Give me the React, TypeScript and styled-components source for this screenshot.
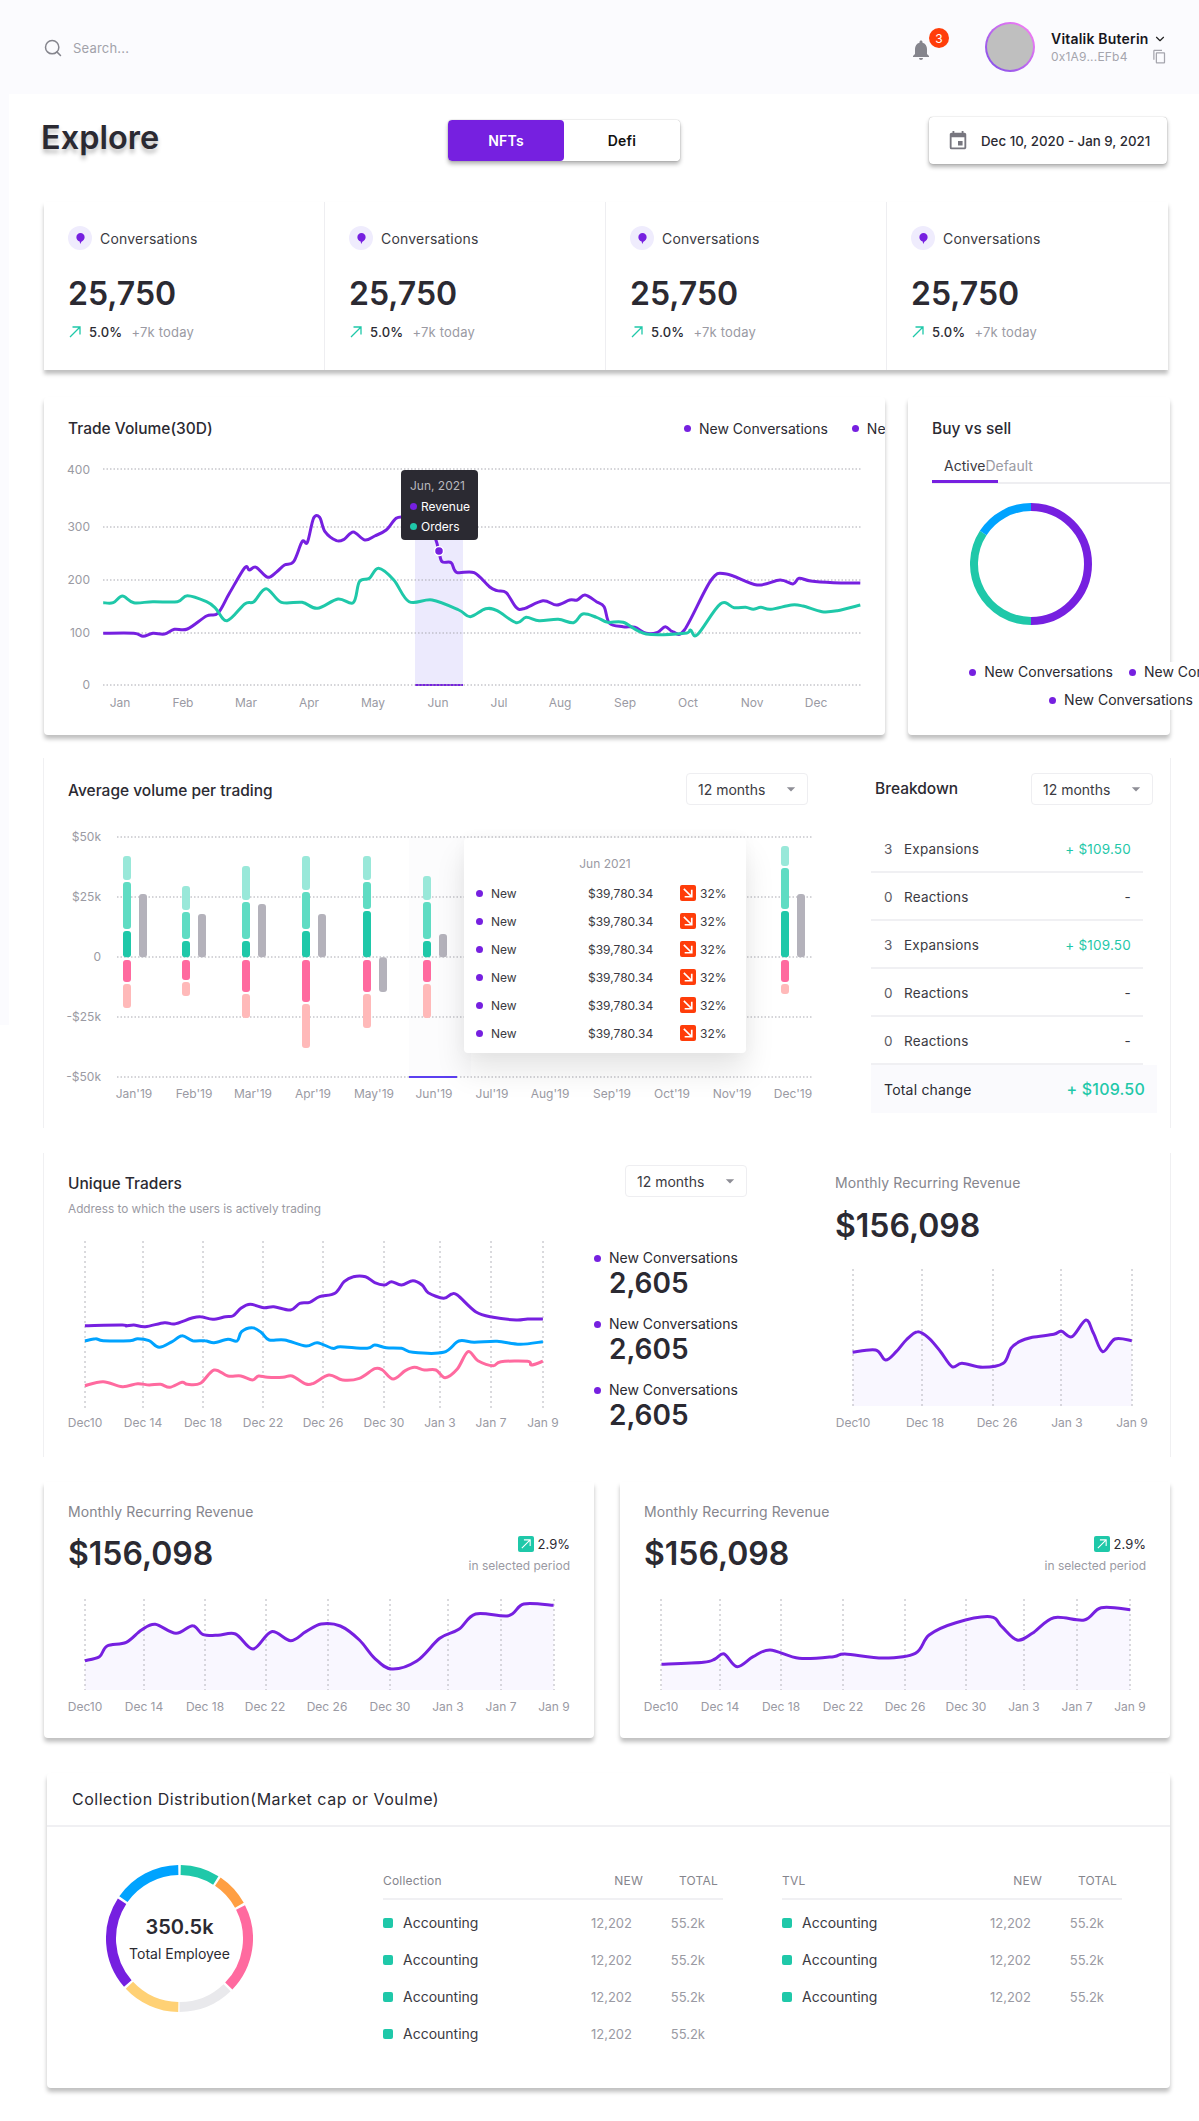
import React from 'react'
import styled, { createGlobalStyle } from 'styled-components'
import { Search, ChevronDown } from 'lucide-react'
import { MdNotifications, MdEvent, MdOutlineContentCopy, MdArrowDropDown } from 'react-icons/md'

const PURPLE = '#7620e0'
const TEAL = '#1fc8a9'
const BLUE = '#00a3ff'
const PINK = '#ff6a9f'
const INK = '#2b2a32'
const MUTED = '#9a9aa3'

type Pt = number[]

// the traces below were read off the reference crops, so they come in crop units
const toPlot = (pts: Pt[], ox: number, oy: number, top: number): Pt[] =>
    pts.map(([x, y]) => [x / 1.3077 - ox, top + y / 3 - oy])

const smooth = (pts: Pt[]) => {
    let d = `M${pts[0][0].toFixed(1)} ${pts[0][1].toFixed(1)}`
    for (let i = 0; i < pts.length - 1; i++) {
        const p0 = pts[i - 1] || pts[i]
        const p1 = pts[i]
        const p2 = pts[i + 1]
        const p3 = pts[i + 2] || p2
        const c1x = p1[0] + (p2[0] - p0[0]) / 6
        const c1y = p1[1] + (p2[1] - p0[1]) / 6
        const c2x = p2[0] - (p3[0] - p1[0]) / 6
        const c2y = p2[1] - (p3[1] - p1[1]) / 6
        d += ` C${c1x.toFixed(1)} ${c1y.toFixed(1)} ${c2x.toFixed(1)} ${c2y.toFixed(1)} ${p2[0].toFixed(1)} ${p2[1].toFixed(1)}`
    }
    return d
}

const arc = (cx: number, cy: number, r: number, from: number, to: number) => {
    const a = ((from - 90) * Math.PI) / 180
    const b = ((to - 90) * Math.PI) / 180
    const large = to - from > 180 ? 1 : 0
    return `M${cx + r * Math.cos(a)} ${cy + r * Math.sin(a)} A${r} ${r} 0 ${large} 1 ${cx + r * Math.cos(b)} ${cy + r * Math.sin(b)}`
}

// DATA
const tradePurple: Pt[] = [[135,760],[175,760],[187,769],[200,760],[215,762],[228,748],[245,747],[270,708],[285,700],[300,640],[320,563],[326,570],[335,562],[350,592],[362,575],[372,555],[384,545],[395,485],[402,487],[410,415],[418,412],[425,455],[440,482],[450,478],[462,456],[477,480],[490,468],[505,450],[518,415],[530,410],[550,400],[562,440],[570,480],[574,513],[578,545],[590,548],[597,577],[620,578],[640,620],[650,632],[662,638],[675,682],[685,686],[710,662],[728,675],[745,660],[755,660],[765,645],[780,665],[790,680],[797,730],[815,740],[830,742],[845,760],[860,757],[870,740],[880,755],[895,750],[930,600],[950,582],[990,615],[1020,600],[1037,612],[1045,595],[1060,603],[1090,608],[1125,609]]
const tradeTeal: Pt[] = [[135,668],[148,668],[160,648],[175,668],[200,665],[232,665],[245,647],[270,665],[282,685],[297,722],[320,672],[332,665],[348,626],[368,667],[395,667],[415,685],[442,657],[462,668],[470,605],[483,595],[495,565],[515,600],[535,665],[565,660],[600,690],[615,710],[635,686],[650,692],[675,728],[688,712],[705,722],[730,718],[750,728],[762,702],[780,712],[795,727],[815,727],[845,762],[895,760],[903,750],[912,764],[942,672],[960,683],[975,682],[985,688],[995,682],[1008,688],[1035,675],[1050,678],[1075,695],[1095,692],[1125,675]]
const tradeMonths: [string, number][] = [['Jan',120],['Feb',183],['Mar',246],['Apr',309],['May',373],['Jun',438],['Jul',499],['Aug',560],['Sep',625],['Oct',688],['Nov',752],['Dec',816]]

const traderPurple: Pt[] = [[111,557],[160,555],[165,558],[175,555],[190,560],[215,548],[228,552],[250,535],[262,530],[278,538],[295,530],[305,527],[315,505],[327,493],[345,503],[358,500],[380,510],[392,490],[405,487],[418,470],[438,460],[450,425],[462,410],[478,410],[490,428],[503,435],[512,425],[525,435],[540,422],[552,435],[560,458],[580,475],[590,463],[598,465],[622,515],[645,532],[675,540],[690,537],[710,537]]
const traderBlue: Pt[] = [[111,603],[125,596],[135,602],[170,602],[180,596],[195,602],[208,622],[225,605],[238,587],[252,602],[268,602],[280,608],[298,598],[310,603],[316,575],[330,563],[342,578],[352,600],[372,600],[400,618],[415,608],[435,625],[445,620],[480,625],[490,615],[505,623],[525,625],[540,637],[580,637],[600,603],[620,607],[650,604],[680,613],[710,605]]
const traderPink: Pt[] = [[111,737],[135,725],[160,740],[180,731],[195,735],[210,733],[222,742],[238,727],[245,733],[262,730],[280,690],[298,708],[315,708],[330,720],[338,708],[350,712],[370,712],[382,708],[400,732],[410,730],[430,705],[448,720],[470,715],[490,686],[500,690],[514,717],[530,692],[542,682],[555,690],[570,690],[582,713],[598,687],[612,635],[625,662],[645,677],[655,665],[690,664],[695,675],[710,664]]

const mrrSmall: Pt[] = [[1115,637],[1145,630],[1158,660],[1172,635],[1185,600],[1200,575],[1215,595],[1230,635],[1245,680],[1258,670],[1285,682],[1312,670],[1322,625],[1333,605],[1350,592],[1378,583],[1388,574],[1402,590],[1420,540],[1430,580],[1442,635],[1458,597],[1480,602]]
const mrrOne: Pt[] = [[111,572],[130,560],[140,528],[165,517],[185,480],[203,463],[230,490],[252,467],[265,493],[285,496],[308,492],[331,537],[355,485],[380,512],[400,485],[420,462],[445,468],[470,510],[490,565],[512,597],[545,573],[575,505],[600,478],[622,432],[665,437],[685,402],[724,406]]
const mrrTwo: Pt[] = [[865,583],[920,577],[935,567],[947,552],[964,590],[985,560],[1007,540],[1045,565],[1090,560],[1105,552],[1155,564],[1197,550],[1215,495],[1250,458],[1295,440],[1310,470],[1330,510],[1350,490],[1378,443],[1418,450],[1440,413],[1478,419]]

const longDates = ['Dec10', 'Dec 14', 'Dec 18', 'Dec 22', 'Dec 26', 'Dec 30', 'Jan 3', 'Jan 7', 'Jan 9']
const shortDates = ['Dec10', 'Dec 18', 'Dec 26', 'Jan 3', 'Jan 9']

const barMonths: [string, number][] = [["Jan'19",134],["Feb'19",194],["Mar'19",253],["Apr'19",313],["May'19",374],["Jun'19",434],["Jul'19",492],["Aug'19",550],["Sep'19",612],["Oct'19",672],["Nov'19",732],["Dec'19",793]]
const barGroups = [
    { x: 127, gx: 143, s: [[318,390],[396,537],[543,622],[630,696],[702,774]], g: [432,622] },
    { x: 186, gx: 202, s: [[408,480],[486,567],[573,622],[630,690],[696,738]], g: [492,622] },
    { x: 246, gx: 262, s: [[348,450],[456,567],[573,622],[630,726],[732,804]], g: [462,622] },
    { x: 306, gx: 322, s: [[318,420],[426,537],[543,622],[630,756],[762,894]], g: [492,622] },
    { x: 367, gx: 383, s: [[318,390],[396,477],[483,622],[630,726],[732,834]], g: [622,726] },
    { x: 427, gx: 443, s: [[378,450],[456,567],[573,622],[630,696],[702,804]], g: [552,622] },
    { x: 785, gx: 801, s: [[288,348],[354,477],[483,622],[630,696],[702,732]], g: [432,622] },
]
const barColours = ['#99e8d9', '#5fdcc3', TEAL, PINK, '#ffb9b9']

const breakdown = [
    { n: 3, label: 'Expansions', value: '+ $109.50', up: true },
    { n: 0, label: 'Reactions', value: '-', up: false },
    { n: 3, label: 'Expansions', value: '+ $109.50', up: true },
    { n: 0, label: 'Reactions', value: '-', up: false },
    { n: 0, label: 'Reactions', value: '-', up: false },
]

const UpArrow: React.FC<{ colour: string; size: number }> = ({ colour, size }) => (
    <svg width={size} height={size} viewBox="0 0 12 12" fill="none" stroke={colour} strokeWidth="1.3">
        <path d="M1 11 11 1M3.5 1H11V8.5" />
    </svg>
)

const BubbleIcon: React.FC = () => (
    <svg width="9" height="11" viewBox="0 0 10 12" fill={PURPLE}>
        <path d="M5 0a4.6 4.6 0 0 1 4.6 4.6c0 2.4-1.9 4.3-3.6 4.9L4.6 12l-.5-2.6C2.100 9 .4 7 .4 4.600A4.600 4.600 0 0 1 5 0z" />
    </svg>
)

const DownTile: React.FC = () => (
    <RedTile>
        <svg width="10" height="10" viewBox="0 0 12 12" fill="none" stroke="#fff" strokeWidth="2">
            <path d="M1 1 10.500 10.500M2 10.500H10.500V2" />
        </svg>
    </RedTile>
)

const Picker: React.FC = () => (
    <Select>
        12 months
        <MdArrowDropDown size={20} color="#8e8e96" />
    </Select>
)

type LineProps = {
    width: number
    height: number
    series: { pts: Pt[]; colour: string }[]
    grid: number[]
    gridTop: number
    gridBottom: number
    labels: [string, number][]
    labelY: number
    area?: boolean
}

const LineChart: React.FC<LineProps> = ({ width, height, series, grid, gridTop, gridBottom, labels, labelY, area }) => (
    <ChartSvg width={width} height={height} viewBox={`0 0 ${width} ${height}`}>
        {area && series.map(s => (
            <path
                key={s.colour}
                d={`${smooth(s.pts)} L${s.pts[s.pts.length - 1][0]} ${gridBottom} L${s.pts[0][0]} ${gridBottom} Z`}
                fill="#f9f7ff"
            />
        ))}
        {grid.map(x => (
            <line key={x} x1={x} x2={x} y1={gridTop} y2={gridBottom} stroke="#b4b4bb" strokeWidth="1" strokeDasharray="2 3" />
        ))}
        {series.map(s => (
            <path key={s.colour} d={smooth(s.pts)} fill="none" stroke={s.colour} strokeWidth="3" strokeLinejoin="round" />
        ))}
        {labels.map(([t, x]) => (
            <text key={t} x={x} y={labelY} textAnchor="middle" dominantBaseline="central">{t}</text>
        ))}
    </ChartSvg>
)

const RevenueCard: React.FC<{ pts: Pt[]; grid: number[]; label: number[] }> = ({ pts, grid, label }) => (
    <RevenueBox>
        <RevenueLabel>Monthly Recurring Revenue</RevenueLabel>
        <RevenueHead>
            <BigMoney>$156,098</BigMoney>
            <PeriodBox>
                <PeriodTop>
                    <GreenTile><UpArrow colour="#fff" size={10} /></GreenTile>
                    2.9%
                </PeriodTop>
                <PeriodNote>in selected period</PeriodNote>
            </PeriodBox>
        </RevenueHead>
        <RevenuePlot>
            <LineChart
                width={550}
                height={130}
                series={[{ pts, colour: PURPLE }]}
                grid={grid}
                gridTop={9}
                gridBottom={100}
                labels={longDates.map((t, i) => [t, label[i]] as [string, number])}
                labelY={116}
                area
            />
        </RevenuePlot>
    </RevenueBox>
)

const CollectionTable: React.FC<{ head: string; rows: number }> = ({ head, rows }) => (
    <div>
        <TableHead>
            <span>{head}</span>
            <HeadNum>NEW</HeadNum>
            <HeadNum>TOTAL</HeadNum>
        </TableHead>
        <TableBody>
            {Array.from({ length: rows }).map((_, i) => (
                <TableRow key={i}>
                    <RowName><Swatch />Accounting</RowName>
                    <CellNum $pad={11}>12,202</CellNum>
                    <CellNum $pad={13}>55.2k</CellNum>
                </TableRow>
            ))}
        </TableBody>
    </div>
)

const App: React.FC = () => {
    return (
        <>
            <GlobalStyle />
            <Page>
                <Header>
                    <SearchBox>
                        <Search size={20} strokeWidth={1.8} color="#85858d" />
                        Search...
                    </SearchBox>
                    <HeaderRight>
                        <BellBox>
                            <MdNotifications size={24} color="#85858d" />
                            <BellBadge>3</BellBadge>
                        </BellBox>
                        <Avatar><AvatarFace /></Avatar>
                        <UserBox>
                            <UserLine>
                                <UserName>Vitalik Buterin</UserName>
                                <ChevronDown size={14} color="#222" strokeWidth={2} />
                            </UserLine>
                            <UserLine>
                                <UserAddress>0x1A9...EFb4</UserAddress>
                                <MdOutlineContentCopy size={15} color="#a5a5ad" />
                            </UserLine>
                        </UserBox>
                    </HeaderRight>
                </Header>
                <Main>
                    <TopBar>
                        <PageTitle>Explore</PageTitle>
                        <Toggle>
                            <ToggleItem $active>NFTs</ToggleItem>
                            <ToggleItem>Defi</ToggleItem>
                        </Toggle>
                        <DateButton>
                            <MdEvent size={22} color="#77767f" />
                            Dec 10, 2020 - Jan 9, 2021
                        </DateButton>
                    </TopBar>

                    <Stats>
                        {[0, 1, 2, 3].map(i => (
                            <Stat key={i}>
                                <StatHead>
                                    <StatIcon><BubbleIcon /></StatIcon>
                                    Conversations
                                </StatHead>
                                <StatValue>25,750</StatValue>
                                <StatChange>
                                    <UpArrow colour={TEAL} size={12} />
                                    <StatPercent>5.0%</StatPercent>
                                    <StatToday>+7k today</StatToday>
                                </StatChange>
                            </Stat>
                        ))}
                    </Stats>

                    <ChartsRow>
                        <TradeCard>
                            <TradeHead>
                                <CardTitle>Trade Volume(30D)</CardTitle>
                                <TradeLegend>
                                    <LegendItem><Dot $colour={PURPLE} />New Conversations</LegendItem>
                                    <LegendItem><Dot $colour={PURPLE} />New Conversations</LegendItem>
                                </TradeLegend>
                            </TradeHead>
                            <PlotArea>
                                <ChartSvg width={841} height={262} viewBox="0 0 841 262">
                                    <rect x={371} y={60} width={48} height={165} fill="#eceafd" />
                                    <rect x={371} y={224} width={48} height={2} fill={PURPLE} />
                                    {[[9, 'M400'], [67, 'M300'], [120, 'M200'], [173, 'M100'], [225, 'M0']].map(([y, k]) => (
                                        <line key={k} x1={59} x2={817} y1={y} y2={y} stroke="#a9a9b1" strokeDasharray="1.5 2" />
                                    ))}
                                    {[['400', 9], ['300', 66], ['200', 119], ['100', 172], ['0', 224]].map(([t, y]) => (
                                        <text key={t} x={46} y={y} textAnchor="end" dominantBaseline="central">{t}</text>
                                    ))}
                                    <path d={smooth(toPlot(tradePurple, 44, 460, 380))} fill="none" stroke={PURPLE} strokeWidth="3" />
                                    <path d={smooth(toPlot(tradeTeal, 44, 460, 380))} fill="none" stroke={TEAL} strokeWidth="3" />
                                    <circle cx={395} cy={91} r={4.500} fill={PURPLE} stroke="#fff" strokeWidth="1.500" />
                                    {tradeMonths.map(([t, x]) => (
                                        <text key={t} x={x - 44} y={242} textAnchor="middle" dominantBaseline="central">{t}</text>
                                    ))}
                                </ChartSvg>
                                <DarkTip>
                                    <DarkTipDate>Jun, 2021</DarkTipDate>
                                    <DarkTipRow><Dot $colour={PURPLE} />Revenue</DarkTipRow>
                                    <DarkTipRow><Dot $colour={TEAL} />Orders</DarkTipRow>
                                </DarkTip>
                            </PlotArea>
                        </TradeCard>

                        <BuyCard>
                            <CardTitle>Buy vs sell</CardTitle>
                            <Tabs>
                                <ActiveTab>Active</ActiveTab>
                                <IdleTab>Default</IdleTab>
                            </Tabs>
                            <BuyDonut width={122} height={122} viewBox="0 0 122 122" fill="none" strokeWidth="8">
                                <path d={arc(61, 61, 57, 0, 180)} stroke={PURPLE} />
                                <path d={arc(61, 61, 57, 180, 303)} stroke={TEAL} />
                                <path d={arc(61, 61, 57, 303, 360)} stroke={BLUE} />
                            </BuyDonut>
                            <BuyLegend>
                                <LegendItem><Dot $colour={PURPLE} />New Conversations</LegendItem>
                                <LegendItem><Dot $colour={PURPLE} />New Conversations</LegendItem>
                                <LegendItem><Dot $colour={PURPLE} />New Conversations</LegendItem>
                            </BuyLegend>
                        </BuyCard>
                    </ChartsRow>

                    <AverageCard>
                        <div>
                            <AverageHead>
                                <AverageTitle>Average volume per trading</AverageTitle>
                                <Picker />
                            </AverageHead>
                            <PlotArea $top={15}>
                                <ChartSvg width={827} height={290} viewBox="0 0 827 290">
                                    <rect x={365} y={17} width={62} height={240} fill="#fcfcfd" />
                                    {[17, 77, 137, 197, 257].map(y => (
                                        <line key={y} x1={73} x2={768} y1={y} y2={y} stroke="#a9a9b1" strokeDasharray="1.5 2" />
                                    ))}
                                    <rect x={365} y={256} width={48} height={2} fill="#5b3ff0" />
                                    {[['$50k', 16], ['$25k', 76], ['0', 136], ['-$25k', 196], ['-$50k', 256]].map(([t, y]) => (
                                        <text key={t} x={57} y={y} textAnchor="end" dominantBaseline="central">{t}</text>
                                    ))}
                                    {barGroups.map(g => (
                                        <g key={g.x}>
                                            {g.s.map(([a, b], i) => (
                                                <rect
                                                    key={i}
                                                    x={g.x - 48}
                                                    y={a / 3 - 70}
                                                    width={8}
                                                    height={(b - a) / 3}
                                                    rx={3}
                                                    fill={barColours[i]}
                                                />
                                            ))}
                                            <rect x={g.gx - 48} y={g.g[0] / 3 - 70} width={8} height={(g.g[1] - g.g[0]) / 3} rx={3} fill="#b4b2bb" />
                                        </g>
                                    ))}
                                    {barMonths.map(([t, x]) => (
                                        <text key={t} x={x - 44} y={273} textAnchor="middle" dominantBaseline="central">{t}</text>
                                    ))}
                                </ChartSvg>
                                <LightTip>
                                    <LightTipDate>Jun 2021</LightTipDate>
                                    {[0, 1, 2, 3, 4, 5].map(i => (
                                        <LightTipRow key={i}>
                                            <Dot $colour={PURPLE} />
                                            <span>New</span>
                                            <span>$39,780.34</span>
                                            <DownTile />
                                            <span>32%</span>
                                        </LightTipRow>
                                    ))}
                                </LightTip>
                            </PlotArea>
                        </div>
                        <div>
                            <BreakdownHead>
                                <CardTitle>Breakdown</CardTitle>
                                <Picker />
                            </BreakdownHead>
                            <BreakdownList>
                                {breakdown.map((r, i) => (
                                    <BreakdownRow key={i}>
                                        <BreakdownCount>{r.n}</BreakdownCount>
                                        <span>{r.label}</span>
                                        <BreakdownValue $up={r.up}>{r.value}</BreakdownValue>
                                    </BreakdownRow>
                                ))}
                            </BreakdownList>
                            <TotalRow>
                                Total change
                                <TotalValue>+ $109.50</TotalValue>
                            </TotalRow>
                        </div>
                    </AverageCard>

                    <UniqueCard>
                        <div>
                            <UniqueHead>
                                <div>
                                    <CardTitle>Unique Traders</CardTitle>
                                    <UniqueNote>Address to which the users is actively trading</UniqueNote>
                                </div>
                                <Picker />
                            </UniqueHead>
                            <UniqueBody>
                                <LineChart
                                    width={550}
                                    height={205}
                                    series={[
                                        { pts: toPlot(traderPurple, 44, 1230, 1140), colour: PURPLE },
                                        { pts: toPlot(traderBlue, 44, 1230, 1140), colour: BLUE },
                                        { pts: toPlot(traderPink, 44, 1230, 1140), colour: PINK },
                                    ]}
                                    grid={[41, 99, 159, 219, 279, 340, 396, 447, 499]}
                                    gridTop={11}
                                    gridBottom={180}
                                    labels={longDates.map((t, i) => [t, [41, 99, 159, 219, 279, 340, 396, 447, 499][i]] as [string, number])}
                                    labelY={192}
                                />
                                <TraderLegend>
                                    {[0, 1, 2].map(i => (
                                        <div key={i}>
                                            <LegendItem><Dot $colour={PURPLE} />New Conversations</LegendItem>
                                            <TraderNumber>2,605</TraderNumber>
                                        </div>
                                    ))}
                                </TraderLegend>
                            </UniqueBody>
                        </div>
                        <SideRevenue>
                            <SideLabel>Monthly Recurring Revenue</SideLabel>
                            <SideMoney>$156,098</SideMoney>
                            <SidePlot>
                                <LineChart
                                    width={335}
                                    height={175}
                                    series={[{ pts: toPlot(mrrSmall, 835, 1260, 1140), colour: PURPLE }]}
                                    grid={[18, 87, 158, 226, 297]}
                                    gridTop={9}
                                    gridBottom={146}
                                    labels={shortDates.map((t, i) => [t, [18, 90, 162, 232, 297][i]] as [string, number])}
                                    labelY={162}
                                    area
                                />
                            </SidePlot>
                        </SideRevenue>
                    </UniqueCard>

                    <RevenueRow>
                        <RevenueCard
                            pts={toPlot(mrrOne, 44, 1590, 1470)}
                            grid={[41, 100, 161, 222, 284, 346, 404, 457, 510]}
                            label={[41, 100, 161, 221, 283, 346, 404, 457, 510]}
                        />
                        <RevenueCard
                            pts={toPlot(mrrTwo, 620, 1590, 1470)}
                            grid={[41, 100, 161, 223, 285, 346, 404, 457, 510]}
                            label={[41, 100, 161, 223, 285, 346, 404, 457, 510]}
                        />
                    </RevenueRow>

                    <CollectionCard>
                        <CollectionHead>
                            <CollectionTitle>Collection Distribution(Market cap or Voulme)</CollectionTitle>
                        </CollectionHead>
                        <CollectionBody>
                            <DonutBox>
                                <svg width={147} height={147} viewBox="0 0 147 147" fill="none" strokeWidth="10">
                                    <path d={arc(73.5, 73.5, 68.5, 1, 32)} stroke={TEAL} />
                                    <path d={arc(73.5, 73.5, 68.5, 34, 61)} stroke="#ff9f43" />
                                    <path d={arc(73.5, 73.5, 68.5, 63, 134)} stroke={PINK} />
                                    <path d={arc(73.5, 73.5, 68.5, 136, 180)} stroke="#e9e9ec" />
                                    <path d={arc(73.5, 73.5, 68.5, 181, 227)} stroke="#ffd175" />
                                    <path d={arc(73.5, 73.5, 68.5, 229, 303)} stroke={PURPLE} />
                                    <path d={arc(73.5, 73.5, 68.5, 305, 359)} stroke={BLUE} />
                                </svg>
                                <DonutText>
                                    <DonutValue>350.5k</DonutValue>
                                    <DonutCaption>Total Employee</DonutCaption>
                                </DonutText>
                            </DonutBox>
                            <CollectionTable head="Collection" rows={4} />
                            <CollectionTable head="TVL" rows={3} />
                        </CollectionBody>
                    </CollectionCard>
                </Main>
            </Page>
        </>
    )
}

const GlobalStyle = createGlobalStyle`
html, body {
    margin: 0;
    padding: 0;
    background: #fff;
    overflow-x: hidden;
}
* {
    box-sizing: border-box;
}
body {
    font-family: Inter, "Liberation Sans", sans-serif;
    font-size: 14px;
    letter-spacing: 0.2px;
    color: ${INK};
}
`

const Page = styled.div`
width: 1199px;
overflow: hidden;
`

const Header = styled.header`
height: 94px;
background: #fbfbfe;
display: flex;
align-items: center;
justify-content: space-between;
padding: 0 32px 0 43px;
`

const SearchBox = styled.div`
display: flex;
align-items: center;
gap: 10px;
padding-top: 1px;
font-size: 13px;
color: #a2a2aa;
`

const HeaderRight = styled.div`
display: flex;
align-items: center;
`

const BellBox = styled.div`
position: relative;
display: flex;
width: 24px;
margin-top: 6px;
`

const BellBadge = styled.span`
position: absolute;
left: 20px;
top: -10px;
width: 20px;
height: 20px;
border-radius: 50%;
background: #ff3d0a;
color: #fff;
font-size: 12px;
display: flex;
align-items: center;
justify-content: center;
`

const Avatar = styled.div`
width: 50px;
height: 50px;
margin-left: 52px;
border-radius: 50%;
padding: 2px;
background: linear-gradient(45deg, #7c4de8, #ff82f5);
`

const AvatarFace = styled.div`
width: 100%;
height: 100%;
border-radius: 50%;
background: #bfbfbf;
`

const UserBox = styled.div`
width: 116px;
margin-left: 16px;
display: flex;
flex-direction: column;
gap: 2px;
`

const UserLine = styled.div`
display: flex;
align-items: center;
justify-content: space-between;
`

const UserName = styled.span`
font-size: 14px;
font-weight: 600;
color: #17161c;
`

const UserAddress = styled.span`
font-size: 12px;
color: #a5a5ad;
`

const Main = styled.main`
position: relative;
padding: 23px 29px 33px 44px;
background: #fff;

&::before {
    content: '';
    position: absolute;
    left: 0;
    top: 0;
    width: 9px;
    height: 931px;
    background: #fbfbfe;
}
`

const TopBar = styled.div`
display: grid;
grid-template-columns: 404px 232px 1fr;
align-items: center;
height: 46px;
`

const PageTitle = styled.h1`
margin: -5px 0 0 -3px;
font-size: 32.500px;
line-height: 40px;
font-weight: 600;
letter-spacing: 0;
color: ${INK};
text-shadow: 0 4px 4px rgba(0, 0, 0, 0.25);
`

const Toggle = styled.div`
display: grid;
grid-template-columns: 116px 116px;
height: 41px;
background: #fff;
border-radius: 4px;
box-shadow: 0 0 1px rgba(0, 0, 0, 0.5), 0 3px 4px rgba(0, 0, 0, 0.3);
overflow: hidden;
`

const ToggleItem = styled.div<{ $active?: boolean }>`
display: flex;
align-items: center;
justify-content: center;
font-size: 14px;
font-weight: 600;
color: ${p => (p.$active ? '#fff' : '#111')};
background: ${p => (p.$active ? PURPLE : '#fff')};
border-radius: ${p => (p.$active ? '4px' : '0')};
`

const DateButton = styled.div`
justify-self: end;
width: 238px;
height: 47px;
margin-right: 3px;
display: flex;
align-items: center;
gap: 12px;
padding-left: 18px;
font-size: 13.300px;
font-weight: 500;
letter-spacing: 0;
background: #fff;
border-radius: 4px;
box-shadow: 0 0 1px rgba(0, 0, 0, 0.4), 0 3px 4px rgba(0, 0, 0, 0.3);
white-space: nowrap;
`

const Stats = styled.section`
width: 1124px;
height: 168px;
margin-top: 39px;
display: grid;
grid-template-columns: repeat(4, 1fr);
background: #fff;
box-shadow: 0 4px 4px rgba(0, 0, 0, 0.25);
`

const Stat = styled.div`
padding: 24px;
border-right: 1px solid #eeeef1;

&:last-child {
    border-right: 0;
}
`

const StatHead = styled.div`
display: flex;
align-items: center;
gap: 8px;
height: 24px;
font-size: 14px;
color: #3b3a42;
`

const StatIcon = styled.span`
width: 24px;
height: 24px;
border-radius: 50%;
background: #efecfd;
display: flex;
align-items: center;
justify-content: center;
`

const StatValue = styled.div`
margin-top: 24px;
font-size: 32px;
line-height: 40px;
font-weight: 600;
letter-spacing: 0;
`

const StatChange = styled.div`
margin-top: 8px;
display: flex;
align-items: center;
height: 20px;
font-size: 13px;
padding-left: 1px;
`

const StatPercent = styled.span`
margin-left: 8px;
font-weight: 500;
`

const StatToday = styled.span`
margin-left: 9px;
color: ${MUTED};
`

const Card = styled.div`
background: #fff;
border-radius: 4px;
box-shadow: 0 4px 4px rgba(0, 0, 0, 0.25);
`

const FlatCard = styled.div`
background: #fff;
box-shadow: -1px 0 0 #f0f0f2, 1px 0 0 #f0f0f2;
`

const ChartsRow = styled.section`
margin-top: 27px;
display: grid;
grid-template-columns: 841px 262px;
gap: 23px;
height: 338px;
`

const TradeCard = styled(Card)`
overflow: hidden;
`

const TradeHead = styled.div`
display: grid;
grid-template-columns: 616px auto;
align-items: center;
height: 63px;
padding-left: 24px;
`

const TradeLegend = styled.div`
display: flex;
gap: 24px;
`

const CardTitle = styled.h2`
margin: 0;
font-size: 15.500px;
line-height: 20px;
font-weight: 500;
letter-spacing: 0;
color: ${INK};
white-space: nowrap;
`

const AverageTitle = styled(CardTitle)`
margin-top: 4px;
`

const CollectionTitle = styled(CardTitle)`
font-size: 16px;
font-weight: 400;
letter-spacing: 0.5px;
`

const LegendItem = styled.div`
display: flex;
align-items: center;
gap: 8px;
font-size: 14px;
line-height: 20px;
letter-spacing: 0;
white-space: nowrap;
`

const Dot = styled.span<{ $colour: string }>`
flex: none;
width: 7px;
height: 7px;
border-radius: 50%;
background: ${p => p.$colour};
`

const PlotArea = styled.div<{ $top?: number }>`
position: relative;
margin-top: ${p => p.$top || 0}px;
`

const ChartSvg = styled.svg`
display: block;
overflow: visible;

text {
    font-family: Inter, "Liberation Sans", sans-serif;
    font-size: 12px;
    letter-spacing: 0;
    fill: ${MUTED};
}
`

const DarkTip = styled.div`
position: absolute;
left: 357px;
top: 10px;
width: 77px;
height: 70px;
padding: 8px 9px 0;
border-radius: 4px;
background: ${INK};
color: #fff;
font-size: 12px;
letter-spacing: 0;
`

const DarkTipDate = styled.div`
margin-bottom: 2px;
line-height: 16px;
color: #b7b7bd;
`

const DarkTipRow = styled.div`
display: flex;
align-items: center;
gap: 4px;
height: 20px;
`

const BuyCard = styled(Card)`
position: relative;
padding: 22px 0 0 24px;
`

const Tabs = styled.div`
display: flex;
height: 28px;
margin-top: 17px;
padding-left: 12px;
font-size: 14px;
line-height: 20px;
border-bottom: 2px solid #eeeef1;
letter-spacing: 0;
`

const ActiveTab = styled.span`
color: #3b3a42;

&::after {
    content: '';
    position: absolute;
    left: 24px;
    top: 83px;
    width: 66px;
    height: 3px;
    background: ${PURPLE};
}
`

const IdleTab = styled.span`
color: ${MUTED};
`

const BuyDonut = styled.svg`
display: block;
margin: 19px 0 0 38px;
`

const BuyLegend = styled.div`
position: relative;
width: 378px;
margin-top: 37px;
display: flex;
flex-wrap: wrap;
justify-content: center;
gap: 8px 16px;
background: #fff;
`

const AverageCard = styled(FlatCard)`
height: 370px;
margin-top: 23px;
display: grid;
grid-template-columns: 827px 1fr;
`

const AverageHead = styled.div`
display: flex;
align-items: center;
justify-content: space-between;
height: 47px;
padding: 15px 63px 0 24px;
`

const Select = styled.div`
width: 122px;
height: 32px;
padding: 0 6px 0 11px;
display: flex;
align-items: center;
justify-content: space-between;
font-size: 14px;
letter-spacing: 0;
color: #3b3a42;
border: 1px solid #eeeef1;
border-radius: 4px;
background: #fff;
`

const LightTip = styled.div`
position: absolute;
left: 420px;
top: 18px;
width: 282px;
height: 215px;
padding: 16px 0 0 12px;
background: #fff;
border-radius: 4px;
font-size: 12px;
letter-spacing: 0;
box-shadow: 0 18px 30px rgba(0, 0, 0, 0.1), 0 0 16px rgba(0, 0, 0, 0.03);
`

const LightTipDate = styled.div`
margin: 0 0 5px -12px;
line-height: 20px;
text-align: center;
color: ${MUTED};
`

const LightTipRow = styled.div`
display: grid;
grid-template-columns: 15px 97px 92px 20px auto;
align-items: center;
height: 28px;
color: #3b3a42;
`

const RedTile = styled.span`
width: 16px;
height: 16px;
border-radius: 2px;
background: #ff3d0a;
display: flex;
align-items: center;
justify-content: center;
`

const BreakdownHead = styled.div`
display: flex;
align-items: center;
justify-content: space-between;
height: 47px;
padding: 15px 17px 0 4px;
`

const BreakdownList = styled.div`
width: 272px;
margin-top: 20px;
`

const BreakdownRow = styled.div`
display: grid;
grid-template-columns: 20px 1fr auto;
align-items: center;
height: 48px;
padding: 2px 12px 0 13px;
border-bottom: 2px solid #f0f0f3;
font-size: 13.500px;
color: #3b3a42;
`

const BreakdownCount = styled.span`
color: #5c5b63;
`

const BreakdownValue = styled.span<{ $up: boolean }>`
color: ${p => (p.$up ? TEAL : '#3b3a42')};
`

const TotalRow = styled.div`
width: 286px;
height: 48px;
display: flex;
align-items: center;
justify-content: space-between;
padding: 0 12px 0 13px;
background: #fafafd;
font-size: 14px;
`

const TotalValue = styled.span`
font-size: 16px;
font-weight: 500;
color: ${TEAL};
`

const UniqueCard = styled(FlatCard)`
height: 304px;
margin-top: 25px;
display: grid;
grid-template-columns: 791px 1fr;
`

const UniqueHead = styled.div`
width: 703px;
display: flex;
align-items: flex-start;
justify-content: space-between;
padding: 21px 0 0 24px;
height: 64px;

& > :last-child {
    margin-top: -9px;
}
`

const UniqueNote = styled.p`
margin: 7px 0 0;
font-size: 11.800px;
line-height: 16px;
letter-spacing: 0;
color: ${MUTED};
`

const UniqueBody = styled.div`
display: flex;
margin-top: 13px;
`

const TraderLegend = styled.div`
padding-top: 18px;
display: flex;
flex-direction: column;
gap: 15px;
`

const TraderNumber = styled.div`
margin-left: 15px;
margin-top: -1px;
font-size: 28px;
line-height: 32px;
font-weight: 600;
letter-spacing: 0;
`

const SideRevenue = styled.div`
padding-top: 20px;
`

const RevenueLabel = styled.div`
padding-left: 24px;
font-size: 14px;
line-height: 20px;
letter-spacing: 0.1px;
color: #85858d;
`

const SideLabel = styled(RevenueLabel)`
padding-left: 0;
`

const BigMoney = styled.div`
font-size: 32px;
line-height: 40px;
font-weight: 600;
letter-spacing: 0;
`

const SideMoney = styled(BigMoney)`
margin-top: 13px;
`

const SidePlot = styled.div`
margin-top: 14px;
`

const RevenueRow = styled.section`
margin-top: 25px;
display: grid;
grid-template-columns: 550px 550px;
gap: 26px;
`

const RevenueBox = styled(Card)`
height: 256px;
border-radius: 0 0 4px 4px;
padding: 20px 0 0;
`

const RevenueHead = styled.div`
display: flex;
justify-content: space-between;
margin-top: 12px;
padding: 0 24px;
height: 40px;
`

const RevenuePlot = styled.div`
margin-top: 16px;
`

const PeriodBox = styled.div`
margin-top: 2px;
text-align: right;
`

const PeriodTop = styled.div`
display: flex;
align-items: center;
justify-content: flex-end;
gap: 4px;
height: 16px;
font-size: 13px;
letter-spacing: 0;
`

const GreenTile = styled.span`
width: 16px;
height: 16px;
border-radius: 2px;
background: ${TEAL};
display: flex;
align-items: center;
justify-content: center;
`

const PeriodNote = styled.div`
margin-top: 6px;
font-size: 12px;
line-height: 16px;
letter-spacing: 0;
color: ${MUTED};
`

const CollectionCard = styled(Card)`
margin: 35px 0 0 3px;
height: 315px;
`

const CollectionHead = styled.div`
display: flex;
align-items: center;
height: 54px;
padding-left: 25px;
border-bottom: 2px solid #f0f0f3;
`

const CollectionBody = styled.div`
display: grid;
grid-template-columns: 336px 340px 340px;
column-gap: 0;
padding-top: 44px;

& > :last-child {
    margin-left: 59px;
    width: 340px;
}
`

const DonutBox = styled.div`
position: relative;
width: 147px;
height: 147px;
margin: -6px 0 0 59px;
`

const DonutText = styled.div`
position: absolute;
inset: 0;
display: flex;
flex-direction: column;
align-items: center;
justify-content: center;
`

const DonutValue = styled.div`
font-size: 20px;
line-height: 26px;
font-weight: 600;
letter-spacing: 0;
`

const DonutCaption = styled.div`
margin-top: 4px;
font-size: 14px;
line-height: 20px;
letter-spacing: 0;
`

const TableHead = styled.div`
display: grid;
grid-template-columns: 1fr 60px 75px;
height: 29px;
padding-right: 5px;
border-bottom: 2px solid #f0f0f3;
font-size: 12px;
line-height: 20px;
color: #85858d;
`

const HeadNum = styled.span`
text-align: right;
`

const TableBody = styled.div`
margin-top: 4px;
`

const TableRow = styled.div`
display: grid;
grid-template-columns: 1fr 60px 75px;
align-items: center;
height: 37px;
padding-right: 5px;
`

const RowName = styled.span`
display: flex;
align-items: center;
gap: 10px;
font-size: 14px;
letter-spacing: 0;
color: #3b3a42;
`

const Swatch = styled.i`
width: 10px;
height: 10px;
border-radius: 2px;
background: ${TEAL};
`

const CellNum = styled.span<{ $pad: number }>`
justify-self: end;
padding-right: ${p => p.$pad}px;
font-size: 13px;
letter-spacing: 0;
color: ${MUTED};
`

export default App
